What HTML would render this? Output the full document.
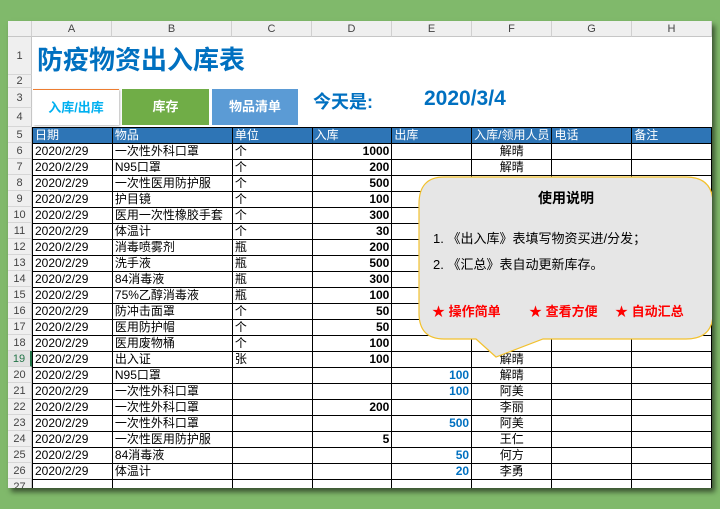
<!DOCTYPE html>
<html><head><meta charset="utf-8"><style>
body{margin:0;width:720px;height:509px;background:#80b96b;position:relative;overflow:hidden;font-family:"Liberation Sans","Noto Sans CJK SC",sans-serif;}
#win{position:absolute;left:8px;top:21px;width:704px;height:467px;background:#fff;box-shadow:3px 4px 5px rgba(0,0,0,.55);overflow:hidden}
.ch{position:absolute;top:0;height:16px;background:#efefef;border-right:1px solid #d0d0d0;border-bottom:1px solid #c6c6c6;font-size:11px;color:#444;text-align:center;line-height:17px;box-sizing:border-box}
.rh{position:absolute;left:0;width:24px;background:#efefef;border-bottom:1px solid #d6d6d6;border-right:1px solid #c6c6c6;font-size:11px;color:#444;text-align:center;box-sizing:border-box}
table{position:absolute;left:24px;top:106px;border-collapse:collapse;table-layout:fixed;font-size:12px}
td{height:15px;border:1px solid #000;padding:0 2px;white-space:nowrap;overflow:hidden;line-height:15px}
tr.h td{background:#2e75b6;color:#fff;border-color:#000}
.r{text-align:right;font-weight:bold}.c{text-align:center}.b{color:#0070c0}
</style></head><body>
<div id="win">
<div class="ch" style="left:0;width:24px"></div>
<div class="ch" style="left:24px;width:80px">A</div>
<div class="ch" style="left:104px;width:120px">B</div>
<div class="ch" style="left:224px;width:80px">C</div>
<div class="ch" style="left:304px;width:80px">D</div>
<div class="ch" style="left:384px;width:80px">E</div>
<div class="ch" style="left:464px;width:80px">F</div>
<div class="ch" style="left:544px;width:80px">G</div>
<div class="ch" style="left:624px;width:80px">H</div>
<div class="rh" style="top:16px;height:38px;line-height:38px">1</div>
<div class="rh" style="top:54px;height:13px;line-height:13px">2</div>
<div class="rh" style="top:67px;height:20px;line-height:20px">3</div>
<div class="rh" style="top:87px;height:19px;line-height:19px">4</div>
<div id="rn"></div>
<div style="position:absolute;left:29px;top:19px;font-size:26px;font-weight:bold;color:#0070c0">防疫物资出入库表</div>
<div style="position:absolute;left:25px;top:68px;width:86px;height:35px;border-top:1px solid #ed7d31;box-shadow:1px 1px 2px #bbb;color:#00b0f0;font-weight:bold;font-size:13px;text-align:center;line-height:35px">入库/出库</div>
<div style="position:absolute;left:114px;top:68px;width:87px;height:36px;background:#70ad47;color:#fff;font-weight:bold;font-size:13px;text-align:center;line-height:36px">库存</div>
<div style="position:absolute;left:204px;top:68px;width:86px;height:36px;background:#5b9bd5;color:#fff;font-weight:bold;font-size:13px;text-align:center;line-height:36px">物品清单</div>
<div style="position:absolute;left:305px;top:67px;font-size:18px;font-weight:bold;color:#0070c0">今天是:</div>
<div style="position:absolute;left:416px;top:66px;font-size:21px;font-weight:bold;color:#0070c0">2020/3/4</div>
<table>
<colgroup><col style="width:80px"><col style="width:120px"><col style="width:80px"><col style="width:80px"><col style="width:80px"><col style="width:80px"><col style="width:80px"><col style="width:80px"></colgroup>
<tr class="h"><td>日期</td><td>物品</td><td>单位</td><td>入库</td><td>出库</td><td>入库/领用人员</td><td>电话</td><td>备注</td></tr>
<tr><td>2020/2/29</td><td>一次性外科口罩</td><td>个</td><td class="r">1000</td><td></td><td class="c">解晴</td><td></td><td></td></tr>
<tr><td>2020/2/29</td><td>N95口罩</td><td>个</td><td class="r">200</td><td></td><td class="c">解晴</td><td></td><td></td></tr>
<tr><td>2020/2/29</td><td>一次性医用防护服</td><td>个</td><td class="r">500</td><td></td><td></td><td></td><td></td></tr>
<tr><td>2020/2/29</td><td>护目镜</td><td>个</td><td class="r">100</td><td></td><td></td><td></td><td></td></tr>
<tr><td>2020/2/29</td><td>医用一次性橡胶手套</td><td>个</td><td class="r">300</td><td></td><td></td><td></td><td></td></tr>
<tr><td>2020/2/29</td><td>体温计</td><td>个</td><td class="r">30</td><td></td><td></td><td></td><td></td></tr>
<tr><td>2020/2/29</td><td>消毒喷雾剂</td><td>瓶</td><td class="r">200</td><td></td><td></td><td></td><td></td></tr>
<tr><td>2020/2/29</td><td>洗手液</td><td>瓶</td><td class="r">500</td><td></td><td></td><td></td><td></td></tr>
<tr><td>2020/2/29</td><td>84消毒液</td><td>瓶</td><td class="r">300</td><td></td><td></td><td></td><td></td></tr>
<tr><td>2020/2/29</td><td>75%乙醇消毒液</td><td>瓶</td><td class="r">100</td><td></td><td></td><td></td><td></td></tr>
<tr><td>2020/2/29</td><td>防冲击面罩</td><td>个</td><td class="r">50</td><td></td><td></td><td></td><td></td></tr>
<tr><td>2020/2/29</td><td>医用防护帽</td><td>个</td><td class="r">50</td><td></td><td></td><td></td><td></td></tr>
<tr><td>2020/2/29</td><td>医用废物桶</td><td>个</td><td class="r">100</td><td></td><td></td><td></td><td></td></tr>
<tr><td>2020/2/29</td><td>出入证</td><td>张</td><td class="r">100</td><td></td><td class="c">解晴</td><td></td><td></td></tr>
<tr><td>2020/2/29</td><td>N95口罩</td><td></td><td></td><td class="r b">100</td><td class="c">解晴</td><td></td><td></td></tr>
<tr><td>2020/2/29</td><td>一次性外科口罩</td><td></td><td></td><td class="r b">100</td><td class="c">阿美</td><td></td><td></td></tr>
<tr><td>2020/2/29</td><td>一次性外科口罩</td><td></td><td class="r">200</td><td></td><td class="c">李丽</td><td></td><td></td></tr>
<tr><td>2020/2/29</td><td>一次性外科口罩</td><td></td><td></td><td class="r b">500</td><td class="c">阿美</td><td></td><td></td></tr>
<tr><td>2020/2/29</td><td>一次性医用防护服</td><td></td><td class="r">5</td><td></td><td class="c">王仁</td><td></td><td></td></tr>
<tr><td>2020/2/29</td><td>84消毒液</td><td></td><td></td><td class="r b">50</td><td class="c">何方</td><td></td><td></td></tr>
<tr><td>2020/2/29</td><td>体温计</td><td></td><td></td><td class="r b">20</td><td class="c">李勇</td><td></td><td></td></tr>
<tr><td></td><td></td><td></td><td></td><td></td><td></td><td></td><td></td></tr>
</table>
<svg style="position:absolute;left:410px;top:155px" width="296" height="185">
<path d="M26 1 H268 Q295 1 295 28 V137 Q295 163 268 163 H125 L78 181 L58 163 H26 Q1 163 1 137 V28 Q1 1 26 1 Z" fill="#e6e6e6" stroke="#f2c12e" stroke-width="1.2"/>
</svg>
<div style="position:absolute;left:410px;top:167px;width:296px;text-align:center;font-size:14px;font-weight:bold">使用说明</div>
<div style="position:absolute;left:425px;top:207px;font-size:13px">1. 《出入库》表填写物资买进/分发；</div>
<div style="position:absolute;left:425px;top:233px;font-size:13px">2. 《汇总》表自动更新库存。</div>
<div style="position:absolute;left:424px;top:280px;font-size:13px;font-weight:bold;color:#ff0000">★ 操作简单</div>
<div style="position:absolute;left:521px;top:280px;font-size:13px;font-weight:bold;color:#ff0000">★ 查看方便</div>
<div style="position:absolute;left:607px;top:280px;font-size:13px;font-weight:bold;color:#ff0000">★ 自动汇总</div>
</div>
<script>
var h='';for(var i=5;i<=27;i++){var t=106+(i-5)*16;h+='<div class="rh" style="top:'+t+'px;height:16px;line-height:16px;'+(i==19?'color:#217346;border-right:2px solid #217346;background:#e2e2e2':'')+'">'+i+'</div>';}
document.getElementById('rn').innerHTML=h;
</script>
</body></html>
